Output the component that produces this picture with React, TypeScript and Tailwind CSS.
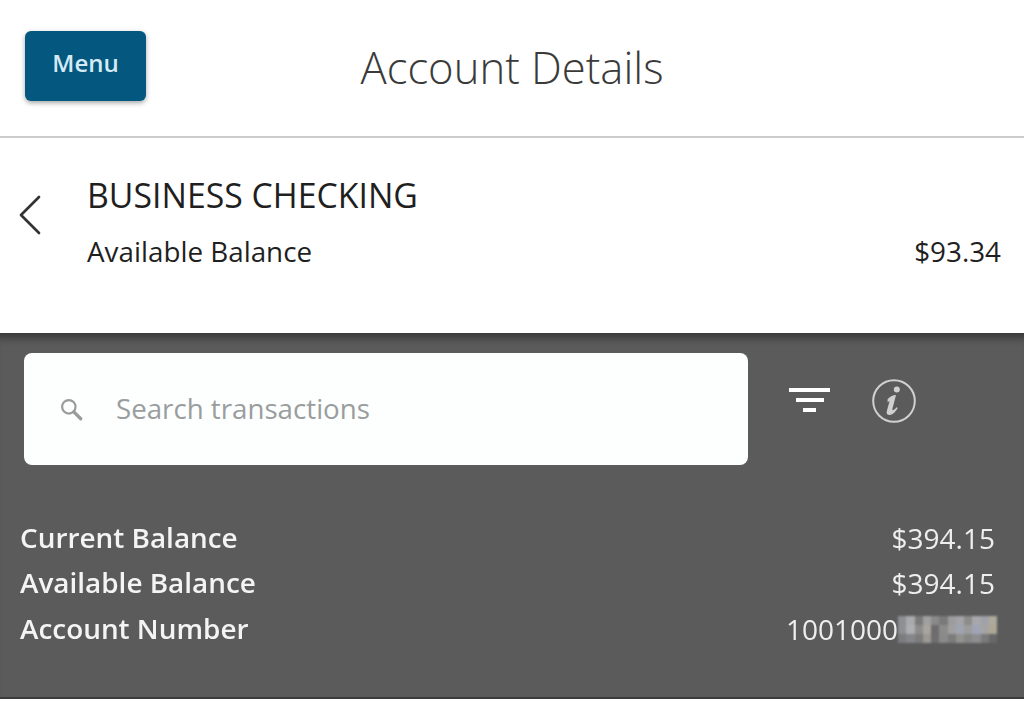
import { ChevronLeft } from "lucide-react"

const maskCells = [
  ["#8d8f92", "#a8aaac", "#7a7a7a", "#a0a0a0", "#8a8a8a", "#7a7a7a", "#9c9c9c", "#a4a4a8", "#8c8c8c", "#a8a8ac", "#a0a2a8", "#aeaa9c"],
  ["#8e9094", "#acaeb2", "#8c8c8c", "#a8a49e", "#6c6c6c", "#8c8c8c", "#a0a0a0", "#9ea4b0", "#9c9c9c", "#a0a4b4", "#a4a4a4", "#aca894"],
  ["#7c7c80", "#84868a", "#7c7c7c", "#9c9894", "#6e6e6e", "#8a8a8a", "#7c7c7c", "#92928e", "#868686", "#8e8e92", "#7a7a7a", "#686868"],
]

function Row({ label, value, children }: { label: string; value?: string; children?: React.ReactNode }) {
  return (
    <div className="flex h-[45.5px] items-center justify-between">
      <span className="text-[27.9px] font-semibold text-[#f4f4f4] blur-[0.4px]">{label}</span>
      <span className="flex items-center text-[28px] text-[#eeeeee]">
        <span className="blur-[0.4px]">{value}</span>
        {children}
      </span>
    </div>
  )
}

export default function App() {
  return (
    <div className="h-[704px] w-[1024px] overflow-hidden bg-white font-['Open_Sans',sans-serif]">
      <header className="relative flex h-[138px] items-center justify-center border-b-2 border-[#cccccc] pb-[1px]">
        <button className="absolute left-[25px] top-[31px] h-[70px] w-[121px] rounded-[6px] bg-[#04587f] pb-[6px] text-[24px] font-semibold text-[#d6eaf5] shadow-[0_2px_5px_rgba(0,0,0,0.35)]">
          Menu
        </button>
        <h1 className="text-[43.6px] font-light text-[#3a3a3a]">Account Details</h1>
      </header>

      <section className="relative h-[195px] pl-[87px] pr-[23px] pt-[35px] text-[#1f1f1f]">
        <ChevronLeft className="absolute left-[-6px] top-[41px] h-[72px] w-[72px] text-[#333333]" strokeWidth={0.9} />
        <h2 className="text-[33.8px] leading-[45px]">BUSINESS CHECKING</h2>
        <div className="mt-[15px] flex items-center justify-between text-[27.8px] leading-[36px]">
          <span>Available Balance</span>
          <span>$93.34</span>
        </div>
      </section>

      <section className="h-[366px] border-b-2 border-[#3c3c3c] bg-[#5b5b5b] px-[20px] pt-[20px] shadow-[inset_0_12px_10px_-8px_rgba(0,0,0,0.45)]">
        <div className="flex items-start pl-[4px]">
          <div className="flex h-[112px] w-[724px] items-center rounded-[8px] bg-[#fdfefe] pl-[34px]">
            <svg viewBox="0 0 24 24" className="h-[26px] w-[26px] text-[#9a9a9a]" fill="none" stroke="currentColor">
              <circle cx="10" cy="10" r="6.2" strokeWidth="2" />
              <path d="M14.6 14.6 21 21" strokeWidth="3" strokeLinecap="round" />
            </svg>
            <span className="ml-[32px] text-[27.7px] text-[#999d9d]">Search transactions</span>
          </div>
          <div className="ml-[41px] mt-[35px] flex w-[41px] flex-col items-center gap-[6px]">
            <span className="h-[4px] w-[41px] bg-white" />
            <span className="h-[4px] w-[28px] bg-white" />
            <span className="h-[4px] w-[13px] bg-white" />
          </div>
          <svg viewBox="0 0 44 44" className="ml-[42px] mt-[26px] h-[44px] w-[44px] text-[#d0d0d0]" fill="none">
            <circle cx="22" cy="22" r="20.8" stroke="currentColor" strokeWidth="2" />
            <circle cx="24.8" cy="10.4" r="3" fill="currentColor" />
            <path
              d="M15.5 20.5c2.4-3 5-4.5 8.5-4.5l-3.6 14c-.3 1.2.7 1.4 1.5.8 1-.7 1.8-1.5 2.6-2.6l1.2.9c-2 3.2-4.4 6.9-8.2 6.9-2.4 0-3.3-1.6-2.7-3.8l2.8-10.2c-.8.3-1.3.8-1.9 1.5z"
              fill="currentColor"
            />
          </svg>
        </div>

        <div className="mr-[9px] mt-[50px]">
          <Row label="Current Balance" value="$394.15" />
          <Row label="Available Balance" value="$394.15" />
          <Row label="Account Number" value="1001000">
            <span className="mr-[-2px] mt-[2px] grid grid-cols-[repeat(12,8.25px)] blur-[0.8px]">
              {maskCells.flat().map((color, i) => (
                <span key={i} className="h-[9px] w-[8.25px]" style={{ backgroundColor: color }} />
              ))}
            </span>
          </Row>
        </div>
      </section>
    </div>
  )
}
